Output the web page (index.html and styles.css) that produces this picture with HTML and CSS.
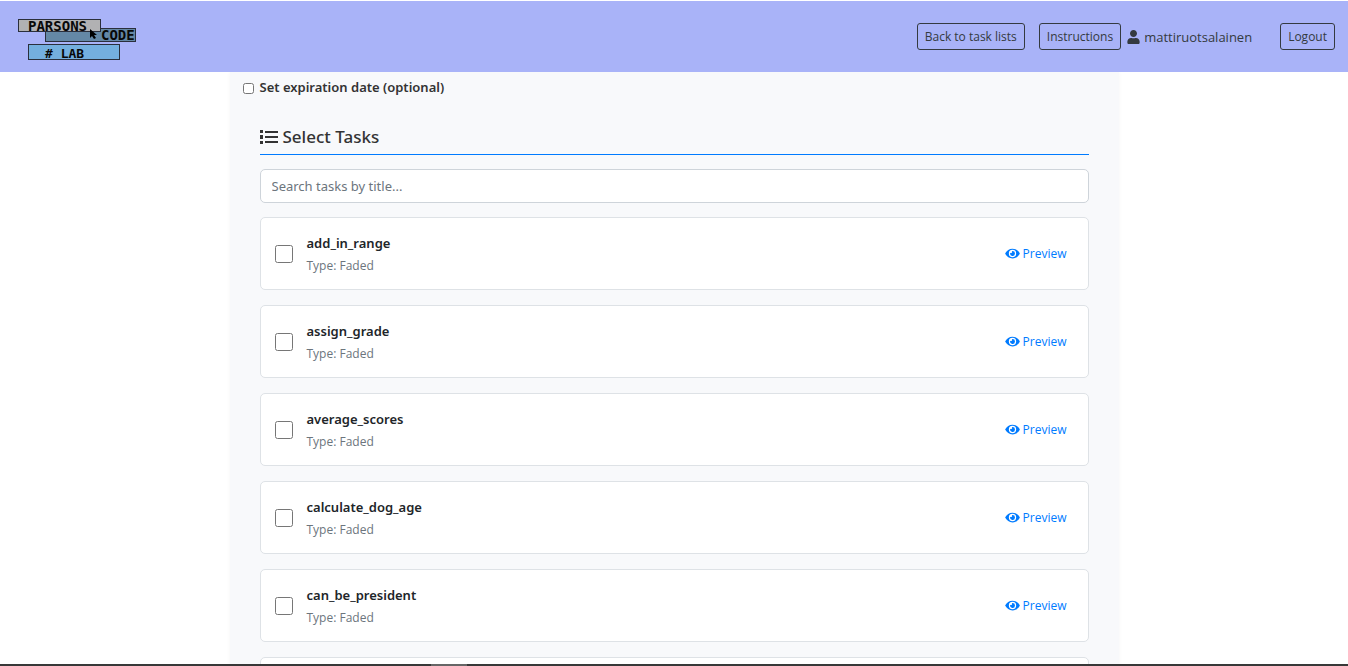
FILE: index.html
```html
<!DOCTYPE html>
<html lang="en">
<head>
<meta charset="utf-8">
<meta name="viewport" content="width=device-width, initial-scale=1">
<title>Parsons Code Lab</title>
<link rel="stylesheet" href="styles.css">
</head>
<body>
<svg class="sprite" aria-hidden="true">
  <symbol id="eye" viewBox="0 0 576 512"><path d="M572.52 241.4C518.29 135.59 410.93 64 288 64S57.68 135.64 3.48 241.41a32.35 32.35 0 0 0 0 29.19C57.71 376.41 165.07 448 288 448s230.32-71.64 284.52-177.41a32.35 32.35 0 0 0 0-29.19zM288 400a144 144 0 1 1 144-144 143.93 143.93 0 0 1-144 144zm0-240a95.31 95.31 0 0 0-25.31 3.79 47.85 47.85 0 0 1-66.9 66.9A95.78 95.78 0 1 0 288 160z"/></symbol>
</svg>
<header class="navbar">
  <a class="brand" href="#" aria-label="Parsons Code Lab">
    <svg class="logo" width="120" height="42" viewBox="0 0 120 42">
      <rect class="block block-slate" x="27.500" y="10.500" width="90" height="13"/>
      <rect class="block block-grey" x="0.500" y="1.500" width="82" height="12"/>
      <rect class="block block-blue" x="10.500" y="26.500" width="91" height="15"/>
      <text class="logo-text" x="10" y="13">PARSONS</text>
      <text class="logo-text" x="83" y="22">CODE</text>
      <text class="logo-text logo-text-small" x="27" y="40"># LAB</text>
      <path d="M72 11v9l2-2 2 3 2-1-2-3h3z"/>
    </svg>
  </a>
  <nav class="nav-links">
    <a class="btn" href="#">Back to task lists</a>
    <a class="btn" href="#">Instructions</a>
    <span class="user">
      <svg class="user-icon" viewBox="0 0 448 512" aria-hidden="true"><path d="M224 256c70.700 0 128-57.300 128-128S294.700 0 224 0 96 57.300 96 128s57.300 128 128 128zm89.600 32h-16.700c-22.200 10.200-46.900 16-72.900 16s-50.600-5.800-72.900-16h-16.700C60.200 288 0 348.200 0 422.400V464c0 26.500 21.500 48 48 48h352c26.500 0 48-21.500 48-48v-41.600c0-74.200-60.200-134.400-134.400-134.400z"/></svg>
      mattiruotsalainen
    </span>
    <button class="btn" type="button">Logout</button>
  </nav>
</header>
<main class="page">
  <form class="panel">
    <div class="expiry">
      <input class="expiry-check" type="checkbox" id="expiry">
      <label for="expiry">Set expiration date (optional)</label>
    </div>
    <section class="tasks">
      <h2 class="heading">
        <svg class="list-icon" viewBox="0 0 18 14" aria-hidden="true"><path d="M0 0h3v3H0zM0 5h3v4H0zM0 11h3v3H0zM5 1h13v2H5zM5 6h13v2H5zM5 11h13v2H5z"/></svg>
        Select Tasks
      </h2>
      <input class="search" type="text" placeholder="Search tasks by title..." aria-label="Search tasks by title">
      <div class="card">
        <input class="card-check" type="checkbox" id="t1">
        <label class="card-text" for="t1"><strong class="title">add_in_range</strong><span class="type">Type: Faded</span></label>
        <button class="preview" type="button"><svg class="eye" aria-hidden="true"><use href="#eye"/></svg>Preview</button>
      </div>
      <div class="card">
        <input class="card-check" type="checkbox" id="t2">
        <label class="card-text" for="t2"><strong class="title">assign_grade</strong><span class="type">Type: Faded</span></label>
        <button class="preview" type="button"><svg class="eye" aria-hidden="true"><use href="#eye"/></svg>Preview</button>
      </div>
      <div class="card">
        <input class="card-check" type="checkbox" id="t3">
        <label class="card-text" for="t3"><strong class="title">average_scores</strong><span class="type">Type: Faded</span></label>
        <button class="preview" type="button"><svg class="eye" aria-hidden="true"><use href="#eye"/></svg>Preview</button>
      </div>
      <div class="card">
        <input class="card-check" type="checkbox" id="t4">
        <label class="card-text" for="t4"><strong class="title">calculate_dog_age</strong><span class="type">Type: Faded</span></label>
        <button class="preview" type="button"><svg class="eye" aria-hidden="true"><use href="#eye"/></svg>Preview</button>
      </div>
      <div class="card">
        <input class="card-check" type="checkbox" id="t5">
        <label class="card-text" for="t5"><strong class="title">can_be_president</strong><span class="type">Type: Faded</span></label>
        <button class="preview" type="button"><svg class="eye" aria-hidden="true"><use href="#eye"/></svg>Preview</button>
      </div>
      <div class="card"></div>
    </section>
  </form>
</main>
<div class="taskbar"><span class="taskbar-item"></span></div>
</body>
</html>
```

FILE: styles.css
```css
* {
  box-sizing: border-box;
}

body {
  display: flex;
  flex-direction: column;
  height: 100vh;
  margin: 0;
  overflow: hidden;
  background: #fff;
  color: #333;
  font: 13px/20px "Open Sans", "Noto Sans", sans-serif;
}

.sprite {
  display: none;
}

.navbar {
  display: flex;
  flex: none;
  align-items: center;
  justify-content: space-between;
  margin-top: 1px;
  padding: 17px 13px 12px 18px;
  background: #a9b3f8;
}

.brand,
.logo {
  display: block;
}

.block {
  stroke: #2a2f3c;
}

.block-slate {
  fill: #6488a6;
}

.block-grey {
  fill: #b1b1b3;
}

.block-blue {
  fill: #74afdf;
}

.logo-text {
  fill: #080808;
  font: bold 14px "DejaVu Sans Mono", monospace;
}

.logo-text-small {
  font-size: 13px;
}

.nav-links {
  display: flex;
  align-items: center;
  margin-bottom: 5px;
}

.btn {
  padding: 3px 7px;
  border: 1px solid #343a40;
  border-radius: 3px;
  background: transparent;
  color: #343a40;
  font: 12px/19px "Open Sans", "Noto Sans", sans-serif;
  text-decoration: none;
}

.btn + .btn {
  margin-left: 14px;
}

.user {
  display: flex;
  align-items: center;
  gap: 4px;
  margin: 0 28px 0 6px;
  color: #343a40;
}

.user-icon {
  width: 13px;
  height: 14px;
  fill: #343a40;
}

.page {
  flex: 1;
  min-height: 0;
  padding: 0 16px;
  overflow: hidden;
}

.panel {
  max-width: 889px;
  margin: 0 auto;
  padding: 5px 30px 30px;
  background: #f8f9fb;
  box-shadow: 0 0 4px rgba(0, 0, 0, 0.04);
}

.expiry {
  display: flex;
  align-items: center;
  gap: 6px;
  margin-left: -17px;
  font-family: "Noto Sans", "Open Sans", sans-serif;
  font-weight: 600;
}

.expiry-check {
  width: 11px;
  height: 11px;
  margin: 2px 0 0;
}

.tasks {
  margin-top: 28px;
}

.heading {
  display: flex;
  align-items: center;
  gap: 5px;
  margin: 0 0 14px;
  padding-bottom: 5px;
  border-bottom: 1px solid #007bff;
  font-family: "Noto Sans", "Open Sans", sans-serif;
  font-size: 17px;
  font-weight: 500;
  line-height: 24px;
}

.list-icon {
  width: 18px;
  height: 14px;
  fill: #333;
}

.search {
  display: block;
  width: 100%;
  padding: 6px 11px;
  border: 1px solid #ced4da;
  border-radius: 5px;
  background: #fff;
  color: #495057;
  font: 13px/20px "Noto Sans", "Open Sans", sans-serif;
}

.search::placeholder {
  color: #6c757d;
  opacity: 1;
}

.card {
  display: flex;
  align-items: center;
  min-height: 73px;
  margin-top: 15px;
  padding: 12px 14px;
  border: 1px solid #dee2e6;
  border-radius: 5px;
  background: #fff;
}

.search + .card {
  margin-top: 14px;
}

.card-check {
  width: 18px;
  height: 18px;
  margin: 0;
}

.card-text {
  display: grid;
  flex: 1;
  gap: 3px;
  margin: 2px 14px 0;
}

.title {
  color: #212529;
  font-family: "Noto Sans", "Open Sans", sans-serif;
  font-weight: 600;
}

.type {
  color: #6c757d;
  font-size: 12px;
}

.preview {
  display: flex;
  align-items: center;
  gap: 3px;
  padding: 3px 7px;
  border: 0;
  background: transparent;
  color: #007bff;
  font: 12px/20px "Open Sans", "Noto Sans", sans-serif;
}

.eye {
  width: 15px;
  height: 13px;
  fill: #007bff;
}

.taskbar {
  display: flex;
  flex: none;
  height: 2px;
  padding-left: 32%;
  background: #383838;
}

.taskbar-item {
  width: 36px;
  background: #666;
}
```
